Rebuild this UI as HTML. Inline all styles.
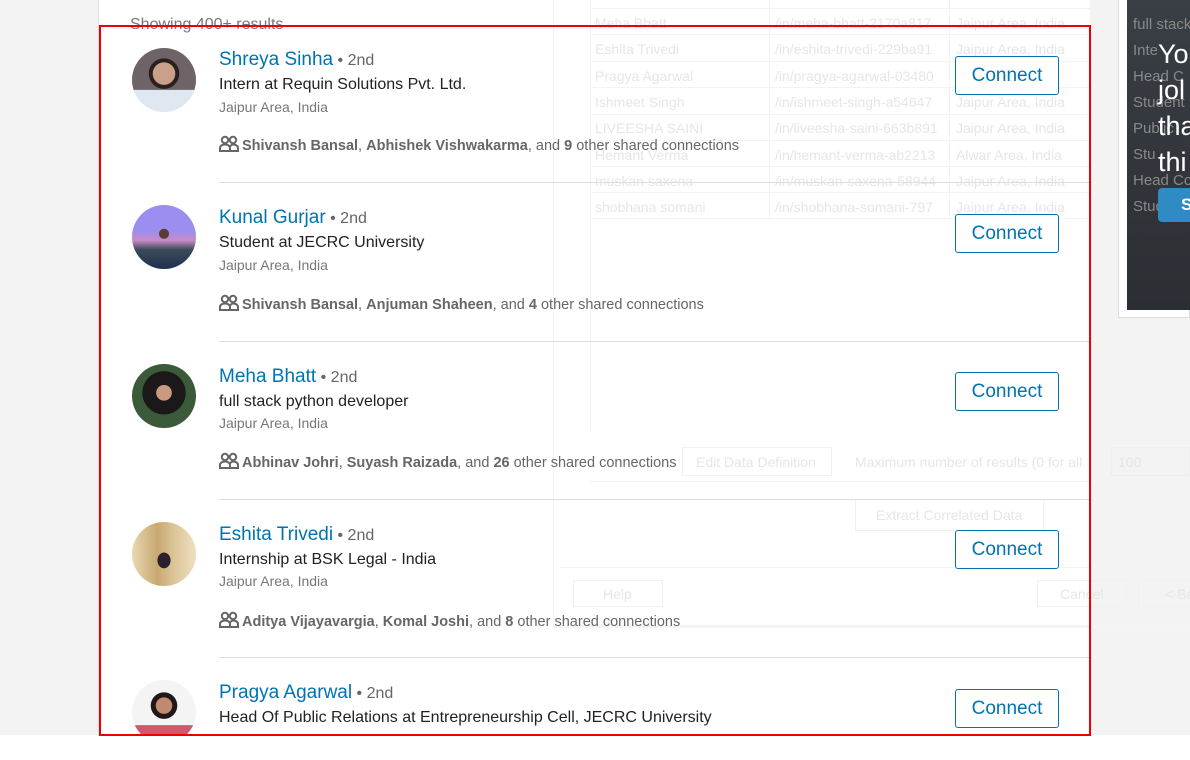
<!DOCTYPE html>
<html><head><meta charset="utf-8"><style>
*{margin:0;padding:0;box-sizing:border-box}
body{width:1190px;height:760px;overflow:hidden;background:#fff;font-family:"Liberation Sans",sans-serif;position:relative}
.bg{position:absolute;left:0;top:0;width:1190px;height:735px;background:#f3f3f3}
.card{position:absolute;left:98px;top:0;width:992px;height:735px;background:#fff;border-left:1px solid #ddd}
.abs{position:absolute;white-space:nowrap}
.show{left:130px;top:16px;font-size:16px;color:#777}
.av{position:absolute;left:132px;width:64px;height:64px;border-radius:50%}
.name{font-size:19px;color:#0073b1}
.deg{font-size:16px;color:#666}
.hl{font-size:16px;color:#222}
.loc{font-size:14px;color:#777}
.sh{font-size:14.5px;color:#666}
.sh b{font-weight:bold;color:#666}
.sh svg{vertical-align:-3px;margin-right:3px}
.div{position:absolute;left:219px;width:871px;height:1px;background:#ddd}
.btn{position:absolute;left:955px;width:104px;height:39px;border:1px solid #0073b1;border-radius:3px;color:#0073b1;font-size:19px;text-align:center;line-height:37px;background:rgba(255,255,255,.6)}
.ov{position:absolute;color:#e6e6e6;font-size:14px;white-space:nowrap}
.tl{position:absolute;background:#f1f4f7;height:1px}
.red{position:absolute;left:99px;top:25px;width:992px;height:711px;border:2px solid #e00;pointer-events:none}
</style></head><body>
<div class="bg"></div>
<div class="card"></div>
<div style="position:absolute;left:553px;top:0;width:1px;height:625px;background:#f3f3f3"></div>
<div style="position:absolute;left:553px;top:625px;width:637px;height:3px;background:#f4f4f4"></div>
<div style="position:absolute;left:590px;top:0;width:1px;height:430px;background:#f3f3f3"></div>
<div style="position:absolute;left:769px;top:0;width:1px;height:218px;background:#f1f4f7"></div>
<div style="position:absolute;left:949px;top:0;width:1px;height:218px;background:#f1f4f7"></div>
<div class="tl" style="left:590px;top:8px;width:530px"></div>
<div class="tl" style="left:590px;top:34px;width:530px"></div>
<div class="tl" style="left:590px;top:61px;width:530px"></div>
<div class="tl" style="left:590px;top:87px;width:530px"></div>
<div class="tl" style="left:590px;top:114px;width:530px"></div>
<div class="tl" style="left:590px;top:140px;width:530px"></div>
<div class="tl" style="left:590px;top:166px;width:530px"></div>
<div class="tl" style="left:590px;top:192px;width:530px"></div>
<div class="tl" style="left:590px;top:218px;width:530px"></div>
<div class="ov" style="left:595px;top:15px">Meha Bhatt</div><div class="ov" style="left:775px;top:15px">/in/meha-bhatt-2170a817</div><div class="ov" style="left:956px;top:15px">Jaipur Area, India</div>
<div class="ov" style="left:595px;top:41px">Eshita Trivedi</div><div class="ov" style="left:775px;top:41px">/in/eshita-trivedi-229ba91</div><div class="ov" style="left:956px;top:41px">Jaipur Area, India</div>
<div class="ov" style="left:595px;top:68px">Pragya Agarwal</div><div class="ov" style="left:775px;top:68px">/in/pragya-agarwal-03480</div>
<div class="ov" style="left:595px;top:94px">Ishmeet Singh</div><div class="ov" style="left:775px;top:94px">/in/ishmeet-singh-a54647</div><div class="ov" style="left:956px;top:94px">Jaipur Area, India</div>
<div class="ov" style="left:595px;top:120px">LIVEESHA SAINI</div><div class="ov" style="left:775px;top:120px">/in/liveesha-saini-663b891</div><div class="ov" style="left:956px;top:120px">Jaipur Area, India</div>
<div class="ov" style="left:595px;top:147px">Hemant Verma</div><div class="ov" style="left:775px;top:147px">/in/hemant-verma-ab2213</div><div class="ov" style="left:956px;top:147px">Alwar Area, India</div>
<div class="ov" style="left:595px;top:173px">muskan saxena</div><div class="ov" style="left:775px;top:173px">/in/muskan-saxena-58944</div><div class="ov" style="left:956px;top:173px">Jaipur Area, India</div>
<div class="ov" style="left:595px;top:199px">shobhana somani</div><div class="ov" style="left:775px;top:199px">/in/shobhana-somani-797</div><div class="ov" style="left:956px;top:199px">Jaipur Area, India</div>
<div style="position:absolute;left:682px;top:447px;width:150px;height:29px;border:1px solid #f0f0f0"></div>
<div class="ov" style="left:696px;top:454px">Edit Data Definition</div>
<div class="ov" style="left:855px;top:454px">Maximum number of results (0 for all</div>
<div style="position:absolute;left:1111px;top:447px;width:79px;height:29px;border:1px solid #eee"></div>
<div class="ov" style="left:1118px;top:454px">100</div>
<div class="tl" style="left:590px;top:481px;width:600px;background:#f3f3f3"></div>
<div style="position:absolute;left:855px;top:499px;width:189px;height:32px;border:1px solid #f0f0f0"></div>
<div class="ov" style="left:876px;top:507px">Extract Correlated Data</div>
<div class="tl" style="left:560px;top:567px;width:630px;background:#f3f3f3"></div>
<div style="position:absolute;left:573px;top:580px;width:90px;height:27px;border:1px solid #f0f0f0"></div>
<div class="ov" style="left:603px;top:586px">Help</div>
<div style="position:absolute;left:1037px;top:580px;width:90px;height:27px;border:1px solid #f0f0f0"></div>
<div class="ov" style="left:1060px;top:586px">Cancel</div>
<div style="position:absolute;left:1138px;top:580px;width:60px;height:27px;border:1px solid #f0f0f0"></div>
<div class="ov" style="left:1165px;top:586px">&lt; Ba</div>
<div style="position:absolute;left:1118px;top:0;width:72px;height:318px;background:#fff;border:1px solid #ddd;border-top:none"></div>
<div style="position:absolute;left:1127px;top:0;width:63px;height:310px;background:linear-gradient(#3a3f45,#2b2e33)"></div>
<div class="abs" style="left:1133px;top:12px;color:#888;font-size:15px;line-height:26px">full stack<br>Inte<br>Head C<br>Student<br>Public<br>Stu<br>Head Co<br>Studen</div>
<div style="position:absolute;left:1158px;top:188px;width:40px;height:34px;background:#2f8bc4;border-radius:4px"></div>
<div class="abs" style="left:1158px;top:36px;color:#fff;font-size:27px;line-height:36px">Yo<br>jol<br>tha<br>thi</div>
<div class="abs" style="left:1181px;top:195px;color:#fff;font-size:17px;font-weight:bold">S</div>

<div class="abs show">Showing 400+ results</div>

<svg width="0" height="0" style="position:absolute"><defs><symbol id="pp" viewBox="0 0 20 18"><g fill="none" stroke="#666" stroke-width="2"><circle cx="6" cy="5" r="3.2"/><circle cx="14" cy="5" r="3.2"/><path d="M1 16v-3c0-2 2-3.5 5-3.5s5 1.5 5 3.5v3zM11 11.5c1-1.2 2-2 3-2 3 0 5 1.5 5 3.5v3h-8"/></g></symbol></defs></svg>

<div class="av" style="top:48px;background:radial-gradient(circle at 50% 40%,#c9a08a 0 22%,#2a2020 23% 30%,transparent 31%),linear-gradient(#6e6468 0 65%,#dfe8f0 66%)"></div>
<div class="abs" style="left:219px;top:49px"><span class="name">Shreya Sinha</span> <span class="deg">• 2nd</span></div>
<div class="abs hl" style="left:219px;top:76px">Intern at Requin Solutions Pvt. Ltd.</div>
<div class="abs loc" style="left:219px;top:99px">Jaipur Area, India</div>
<div class="abs sh" style="left:219px;top:135px"><svg width="20" height="18"><use href="#pp"/></svg><b>Shivansh Bansal</b>, <b>Abhishek Vishwakarma</b>, and <b>9</b> other shared connections</div>
<div class="div" style="top:182px"></div>
<div class="btn" style="top:56px">Connect</div>

<div class="av" style="top:205px;background:radial-gradient(circle at 50% 45%,#5a3d30 0 10%,transparent 11%),linear-gradient(#9b8ef0 0 40%,#c98bc8 55%,#3a4a5a 70%,#203050)"></div>
<div class="abs" style="left:219px;top:207px"><span class="name">Kunal Gurjar</span> <span class="deg">• 2nd</span></div>
<div class="abs hl" style="left:219px;top:234px">Student at JECRC University</div>
<div class="abs loc" style="left:219px;top:257px">Jaipur Area, India</div>
<div class="abs sh" style="left:219px;top:294px"><svg width="20" height="18"><use href="#pp"/></svg><b>Shivansh Bansal</b>, <b>Anjuman Shaheen</b>, and <b>4</b> other shared connections</div>
<div class="div" style="top:341px"></div>
<div class="btn" style="top:214px">Connect</div>

<div class="av" style="top:364px;background:radial-gradient(circle at 50% 45%,#c99a80 0 16%,#1a1818 17% 45%,#3a5a3a 46%)"></div>
<div class="abs" style="left:219px;top:366px"><span class="name">Meha Bhatt</span> <span class="deg">• 2nd</span></div>
<div class="abs hl" style="left:219px;top:393px">full stack python developer</div>
<div class="abs loc" style="left:219px;top:415px">Jaipur Area, India</div>
<div class="abs sh" style="left:219px;top:452px"><svg width="20" height="18"><use href="#pp"/></svg><b>Abhinav Johri</b>, <b>Suyash Raizada</b>, and <b>26</b> other shared connections</div>
<div class="div" style="top:499px"></div>
<div class="btn" style="top:372px">Connect</div>

<div class="av" style="top:522px;background:radial-gradient(ellipse at 50% 60%,#2a2030 0 14%,transparent 15%),linear-gradient(90deg,#e8d8b0,#c8a870 40%,#d8c090 60%,#f0e0c0)"></div>
<div class="abs" style="left:219px;top:524px"><span class="name">Eshita Trivedi</span> <span class="deg">• 2nd</span></div>
<div class="abs hl" style="left:219px;top:551px">Internship at BSK Legal - India</div>
<div class="abs loc" style="left:219px;top:573px">Jaipur Area, India</div>
<div class="abs sh" style="left:219px;top:611px"><svg width="20" height="18"><use href="#pp"/></svg><b>Aditya Vijayavargia</b>, <b>Komal Joshi</b>, and <b>8</b> other shared connections</div>
<div class="div" style="top:657px"></div>
<div class="btn" style="top:530px">Connect</div>

<div class="av" style="top:680px;background:radial-gradient(circle at 50% 40%,#c08a70 0 16%,#201818 17% 26%,transparent 27%),linear-gradient(#f4f4f4 0 70%,#d05a6a 71%)"></div>
<div class="abs" style="left:219px;top:682px"><span class="name">Pragya Agarwal</span> <span class="deg">• 2nd</span></div>
<div class="abs hl" style="left:219px;top:709px">Head Of Public Relations at Entrepreneurship Cell, JECRC University</div>
<div class="btn" style="top:689px">Connect</div>

<div style="position:absolute;left:0;top:735px;width:1190px;height:25px;background:#fff"></div>
<div class="red"></div>
</body></html>
